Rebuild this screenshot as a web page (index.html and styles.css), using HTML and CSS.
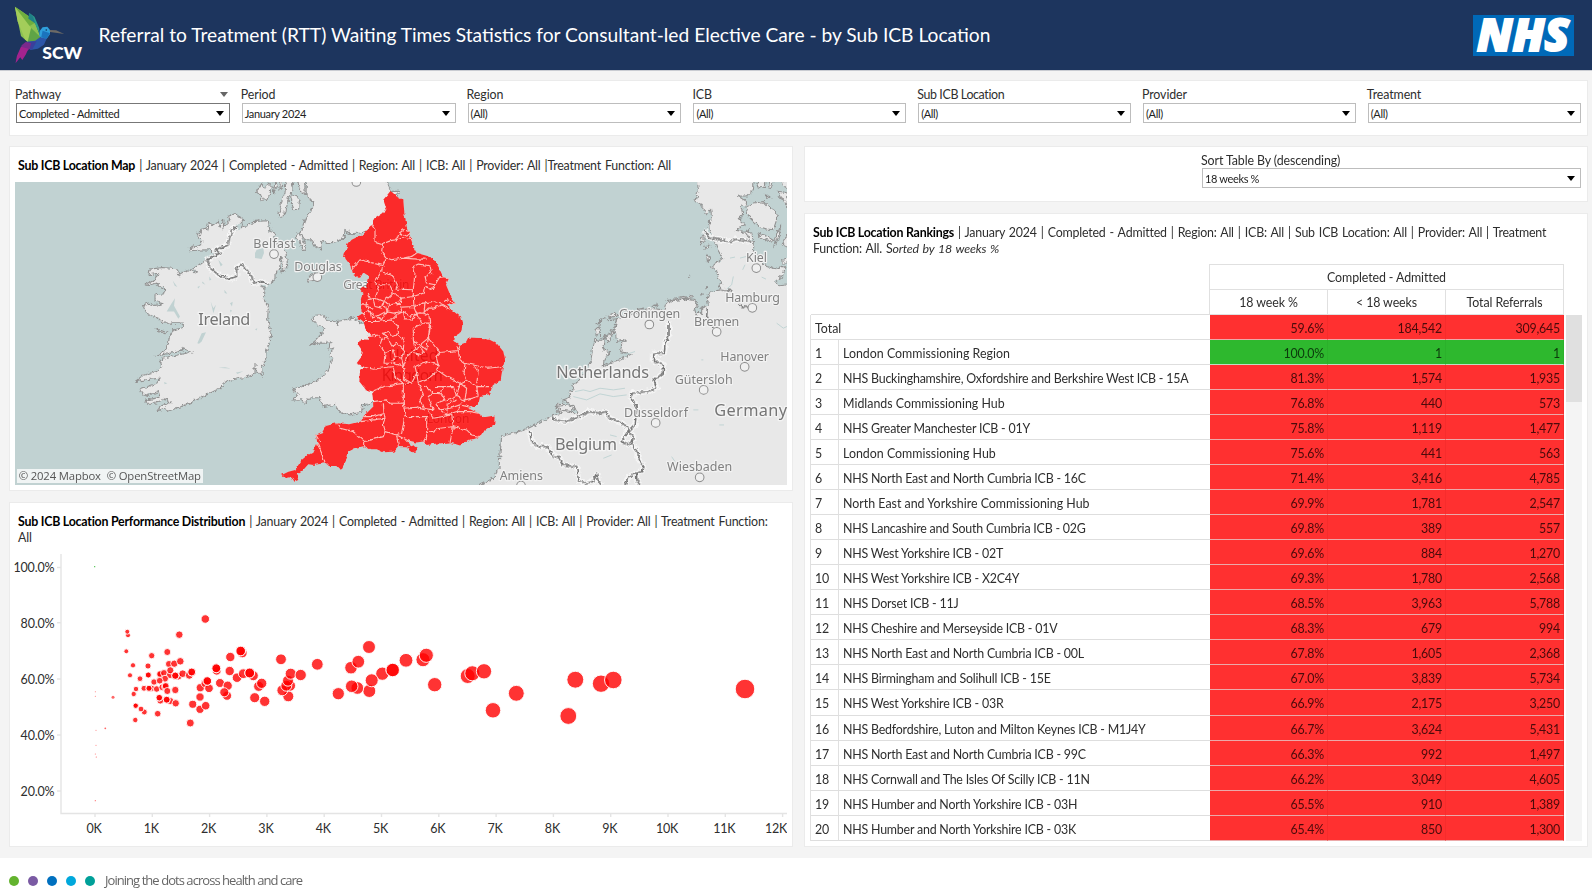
FILE: index.html
```html
<!DOCTYPE html>
<html lang="en">
<head>
<meta charset="utf-8">
<title>RTT Waiting Times</title>
<link rel="stylesheet" href="styles.css">
</head>
<body>
<header class="top">
  <svg class="scw" viewBox="0 0 250 210" preserveAspectRatio="none">
    <path fill="#8cc152" d="M44 20 62 32 84 48 104 68 120 112 104 124 82 126 62 108Z"/>
    <path fill="#6fae3e" d="M44 20 70 66 88 78 104 68 84 48Z"/>
    <path fill="#a3cd5a" d="M44 20 52 64 74 118 82 126 92 84Z"/>
    <path fill="#5fa446" d="M92 84 120 112 104 124 82 126Z"/>
    <path fill="#2c9a8c" d="M86 38 102 50 116 84 118 104 104 72Z"/>
    <path fill="#1f7f86" d="M86 38 84 56 104 70 98 50Z"/>
    <path fill="#2f9fdc" d="M118 92 126 82 140 80 148 90 148 102 138 116 124 118 116 106Z"/>
    <path fill="#1b74bd" d="M126 92 148 100 138 116 122 112Z"/>
    <circle cx="137" cy="90" r="2.5" fill="#12325c"/>
    <path fill="#6c6a66" d="M147 90 166 91 190 102 164 98 148 96Z"/>
    <path fill="#2c56a8" d="M76 126 104 122 118 112 138 116 130 134 112 146 90 150Z"/>
    <path fill="#3b3f9b" d="M76 126 108 124 96 148 84 148Z"/>
    <path fill="#7a2a8c" d="M76 126 92 130 88 146 74 158 60 152 64 136Z"/>
    <path fill="#a3238e" d="M62 140 84 146 76 164 66 180 60 172 46 190 50 168Z"/>
    <text x="125" y="177" class="scw-text" textLength="118" lengthAdjust="spacingAndGlyphs">SCW</text>
  </svg>
  <h1>Referral to Treatment (RTT) Waiting Times Statistics for Consultant-led Elective Care - by Sub ICB Location</h1>
  <svg class="nhs" viewBox="0 0 101 41">
    <rect width="101" height="41" fill="#0069b8"/>
    <text x="4" y="36.3" class="nhs-text" textLength="92" lengthAdjust="spacingAndGlyphs">NHS</text>
  </svg>
</header>

<main>
  <section class="card filters">
    <div class="field active"><label>Pathway<i class="caret grey"></i></label><div class="select">Completed - Admitted<i class="caret"></i></div></div>
    <div class="field"><label>Period</label><div class="select">January 2024<i class="caret"></i></div></div>
    <div class="field"><label>Region</label><div class="select">(All)<i class="caret"></i></div></div>
    <div class="field"><label>ICB</label><div class="select">(All)<i class="caret"></i></div></div>
    <div class="field tight"><label>Sub ICB Location</label><div class="select">(All)<i class="caret"></i></div></div>
    <div class="field"><label>Provider</label><div class="select">(All)<i class="caret"></i></div></div>
    <div class="field"><label>Treatment</label><div class="select">(All)<i class="caret"></i></div></div>
  </section>

  <div class="columns">
    <div class="col">
      <section class="card map-card">
        <h2><b>Sub ICB Location Map</b> | January 2024 | Completed - Admitted | Region: All | ICB: All | Provider: All |Treatment Function: All</h2>
        <svg class="map" viewBox="45 37 2316 908" preserveAspectRatio="none">
          <defs>
            <filter id="rough" x="-5%" y="-5%" width="110%" height="110%" color-interpolation-filters="sRGB">
              <feTurbulence type="fractalNoise" baseFrequency="0.09" numOctaves="3" seed="4"/>
              <feDisplacementMap in="SourceGraphic" scale="16" xChannelSelector="R" yChannelSelector="G"/>
            </filter>
            <filter id="fine" x="-5%" y="-5%" width="110%" height="110%" color-interpolation-filters="sRGB">
              <feTurbulence type="fractalNoise" baseFrequency="0.07" numOctaves="2" seed="9"/>
              <feDisplacementMap in="SourceGraphic" scale="12" xChannelSelector="R" yChannelSelector="G"/>
            </filter>
            <path id="england" d="M392 63 412 82 430 92 433 130 440 170 452 205 462 235 470 250 500 258 520 268 535 290 548 318 567 325 558 345 575 385 587 402 560 405 575 420 600 440 607 465 605 485 582 500 580 513 600 528 615 522 625 503 680 505 710 520 730 545 735 570 727 600 722 630 700 645 690 672 660 678 658 695 640 710 625 715 655 730 672 742 704 737 703 765 672 785 662 800 630 810 600 827 570 818 520 822 500 825 490 815 470 818 440 810 450 830 415 828 400 845 370 847 350 838 330 838 314 828 285 835 265 845 262 865 243 900 232 888 210 888 195 880 160 885 145 883 125 905 110 915 115 930 103 935 95 920 75 925 65 915 85 905 105 900 125 870 145 853 160 845 172 820 168 795 185 790 197 768 230 760 270 763 303 755 310 740 340 710 338 680 336 665 318 660 298 635 300 600 315 592 290 580 305 560 308 545 295 525 300 508 325 510 330 495 318 480 310 455 290 440 305 430 303 400 310 370 302 360 318 350 325 318 310 308 300 325 275 310 270 285 252 262 262 225 275 210 305 195 335 165 340 150 370 130 378 115 370 90ZM440 833 462 826 475 835 462 850Z"/>
            <path id="ie-border" d="M712 170 695 180 685 225 645 240 660 250 620 270 630 295 655 315 690 327 710 320 710 295 725 283 740 300 755 320 760 340 785 335 803 345"/>
            <path id="eu-border" d="M507 455 507 495 495 520 493 550 462 550 460 572 490 585 490 610 462 630 470 655 440 665 395 670 395 690 412 710 405 765 385 785 365 815 395 825 400 800 385 785M397 825 415 850 413 865 430 885 425 905 410 912 410 930 420 945M410 908 385 920 376 945M160 740 165 750 200 755 235 740 270 725 300 730 315 725 330 745 355 755 383 770 385 785M88 780 95 815 115 830 145 830 155 855 180 865 190 885 230 890 235 930 250 940 280 935 290 912 295 935 305 945M612 180 630 205 690 215 710 208 755 215"/>
          </defs>
          <rect x="45" y="37" width="2316" height="908" fill="#c1d2d2"/>
          <g class="land" filter="url(#rough)">
            <path d="M712 170 730 152 725 175 765 155 805 153 810 185 825 190 818 215 845 225 858 250 863 290 845 308 850 280 843 262 838 300 825 312 825 330 803 345 785 345 795 360 793 390 805 410 803 450 813 485 808 520 798 545 797 570 785 595 787 617 765 595 765 580 765 612 740 622 705 628 672 637 670 650 640 665 610 680 580 695 550 708 520 718 503 724 495 714 475 722 480 708 510 700 500 685 465 700 438 700 440 690 480 682 475 665 440 678 430 675 418 658 440 650 470 640 480 625 450 628 405 635 430 615 470 605 485 590 480 575 487 565 530 556 575 547 545 535 540 545 500 552 467 560 490 545 505 525 508 500 520 480 550 473 550 460 490 460 475 445 460 440 440 430 430 405 445 400 465 407 490 402 465 395 465 375 495 372 493 355 480 350 470 340 445 347 437 345 465 330 475 310 447 315 450 298 490 293 530 297 537 315 560 300 590 308 580 295 600 285 625 265 655 245 620 240 570 243 568 235 605 225 605 210 590 190 600 195 603 175 620 180 625 162 640 165 655 155 660 170 672 150 670 175 690 150 685 140 705 132 730 150Z"/>
            <path d="M920 10 918 75 938 95 938 115 915 150 900 190 915 210 935 210 945 230 962 238 965 215 985 222 1010 215 1032 205 1035 180 1050 192 1083 190 1140 170 1200 65 1172 65 1168 55 1150 10Z"/>
            <path d="M890 190 900 190 912 218 916 243 906 235 900 215 890 205ZM860 10 882 10 874 70 862 95 858 130 845 142 835 137 845 95 855 70ZM876 80 888 76 898 95 896 118 882 120 874 98ZM770 65 785 42 795 55 806 40 817 52 808 75 800 92 786 90 782 75ZM820 10 832 50 820 70 824 45ZM842 10 848 50 840 60ZM890 10 898 60 916 75 912 10ZM922 335 935 312 962 312 960 330ZM468 476 498 488 490 490 470 480Z"/>
            <path d="M1110 455 1085 460 1060 445 1012 455 1014 468 1005 455 985 450 965 435 940 437 940 452 955 470 975 474 965 490 950 510 925 530 945 520 975 520 990 515 987 540 1000 535 988 560 998 565 985 600 965 620 950 635 900 650 875 660 895 672 880 690 905 690 915 700 925 685 958 683 965 695 970 710 1005 703 1020 725 1050 735 1085 725 1088 705 1115 700 1170 660 1170 480Z"/>
          </g>
          <g transform="translate(1500 0)">
            <g class="land" filter="url(#rough)">
              <path d="M590 10 595 60 585 95 605 105 618 135 632 120 636 150 625 155 628 180 640 205 650 235 668 265 650 280 632 292 650 300 655 325 665 340 655 350 665 360 630 365 622 385 625 405 605 415 605 430 588 432 583 415 592 410 585 392 560 388 520 392 497 402 492 420 455 416 430 425 380 436 350 447 345 480 330 495 300 512 285 508 277 540 272 580 255 605 235 635 215 645 222 660 205 665 210 682 190 690 205 705 180 700 165 715 185 730 150 740 120 758 85 775 50 787 20 795 5 800 0 850 -3 895 -20 925 -60 945 -90 985 900 985 900 10Z"/>
              <path d="M320 437 345 430 352 437 330 444ZM370 430 400 424 435 418 420 426ZM455 410 475 404 470 408ZM500 392 580 378 578 384 520 392ZM285 480 296 470 300 485 290 498ZM290 462 310 447 318 450ZM615 230 630 230 628 238 614 238ZM620 255 632 262 622 275ZM605 205 612 190 612 215 604 225ZM566 316 570 318 566 320ZM618 350 622 353 618 356ZM605 370 610 373 606 376Z"/>
            </g>
            <g class="water" filter="url(#rough)">
              <path d="M765 10 760 60 740 78 712 80 738 92 740 105 722 110 728 130 718 150 735 165 708 182 730 185 745 180 752 212 762 225 760 245 785 280 800 290 825 297 845 290 855 292 850 315 825 335 840 348 900 340 900 10Z"/>
              <path d="M315 500 325 515 345 485 350 515 380 510 365 520 362 545 395 552 360 570 330 578 310 590 312 570 330 545 308 540 315 520ZM190 690 225 715 235 735 210 725 185 712ZM303 445 325 450 350 447 345 470 330 490 302 505 300 470Z"/>
            </g>
            <g class="land" filter="url(#rough)">
              <path d="M738 112 762 100 790 96 805 112 825 120 830 150 820 180 800 178 775 170 755 150 745 140ZM775 190 800 198 818 210 808 215 780 202ZM822 228 830 195 842 165 838 195 828 222ZM730 185 755 190 760 210 735 195ZM848 215 865 195 865 228 852 228ZM835 65 865 70 865 120 850 90 840 85ZM768 30 800 30 795 50 775 55ZM810 30 820 30 812 60 806 50ZM845 30 870 30 870 55 850 50ZM848 268 865 265 865 280 850 280ZM795 75 812 82 800 86ZM170 710 200 705 225 715 215 725 180 720Z"/>
            </g>
            <path class="streams" d="M225 665 250 660 270 665 300 655 340 660 375 655M220 680 260 690 300 672 340 680 380 675M330 795 350 800M310 865 335 855M515 860 525 875M580 720 595 720M658 765 672 765M785 322 798 328M700 320 695 345 680 358M690 265 705 262M728 300 735 285M830 460 850 475 861 470M720 265 740 260M345 515 355 505M375 555 405 545M690 574 700 574M604 570 610 570"/>
          </g>
          <g class="water-in">
            <path d="M770 240 790 235 792 250 785 268 765 265 765 250ZM655 270 668 285 662 290ZM500 425 515 400 525 385 522 408 540 440 535 447 522 425ZM632 395 640 415 648 405 640 430ZM592 520 605 490 618 487 605 515 597 522ZM518 332 532 352 524 348ZM655 594 675 592 693 596 675 595ZM673 360 682 372 674 370ZM690 400 698 396 696 410ZM628 320 634 330 628 332ZM608 335 616 345 606 340ZM765 478 772 475 770 482ZM592 352 600 348 596 356ZM708 165 728 160 720 180 708 182ZM492 636 502 640 494 643ZM690 420 696 422 692 428ZM708 608 730 604 712 612Z"/>
          </g>
          <g class="border-halo" filter="url(#rough)">
            <use href="#ie-border"/><use href="#eu-border" x="1500"/>
          </g>
          <g class="border-line" filter="url(#rough)">
            <use href="#ie-border"/><use href="#eu-border" x="1500"/>
            <path d="M2122 415 2120 440 2135 470 2145 480M2165 360 2190 362 2200 372M2215 400 2225 410 2245 413"/>
          </g>
          <g transform="translate(780 0)">
            <use href="#england" class="base" filter="url(#fine)"/>
            <g class="under">
              <text x="250" y="357" textLength="198" class="s">Great Britain</text>
              <text x="385" y="572" textLength="150">United</text>
              <text x="365" y="633" textLength="184">Kingdom</text>
              <text x="500" y="759" textLength="128" class="s">London</text>
            </g>
            <use href="#england" class="region" filter="url(#fine)"/>
            <path class="seams" filter="url(#fine)" d="M335 165 345 180 345 215 368 222 395 212 410 210 418 190 432 180 445 185M410 210 430 205 455 210M418 190 440 200 450 190M368 222 365 245 380 265 395 270 430 265 470 268 500 268M430 265 455 260 470 250M275 300 300 270 340 280 368 288 380 265M368 288 365 305 400 320 412 345 408 358 460 360 465 310 460 290 475 283 510 288 515 310 495 320 500 340 525 345 540 320 567 325M365 305 345 335 355 360 345 385 320 390 318 410 340 415M355 345 385 345 400 370 425 385 460 380 460 360M345 385 370 395 390 380 400 370M425 385 420 400 390 405 370 395 378 425 400 430 425 425 420 400M460 380 490 370 495 350 520 360 525 345M460 380 462 410 425 412M462 410 490 400 520 395 545 400 560 390 587 402M462 410 470 430 450 440 430 425M470 430 490 430 505 415 520 415 545 405 570 420M495 400 492 430 510 440 512 460 505 500M303 430 330 425 350 440 378 425M318 410 330 425 335 445 350 440 365 450 378 425M303 405 325 405M310 430 320 450M340 390 345 410 365 415 370 395M385 405 382 430M330 385 325 370M312 455 350 455 395 450 410 435 430 425 435 450 455 450 470 430 485 460 510 460M395 450 415 470 415 495 432 510 430 540 410 520 400 530 380 500 365 510 358 495 325 500M485 460 460 475 460 510 480 525 505 505 512 470 510 460M415 495 395 500 385 485 370 490 380 500M365 510 360 525 375 550 400 540 405 560 425 565 432 540M375 550 372 580 395 580 405 560M400 580 430 590 425 565 M460 510 465 540 440 560 430 590M465 540 480 530 490 545 475 555 460 550M480 525 500 540 505 505 525 530 540 548 595 542 600 528M540 548 528 560 535 585 500 575 465 590 470 610 455 640 430 625 435 600 425 590M595 542 600 570 615 580 685 595 727 590M595 542 592 530M615 580 612 610 620 630 600 640 560 620 530 600 535 585M315 592 340 598 400 590 405 620 430 640 455 640M336 665 370 650 400 645 430 640 430 700 390 700 375 690 340 695M470 610 475 640 500 630 530 605M475 640 490 670 480 690 490 715 520 720 505 680 520 670 500 650 490 645M520 670 545 672 550 650 525 650M545 672 555 690 530 700M550 650 580 650 590 680 560 690M600 640 590 680 615 690 620 655 600 640M620 630 650 650 690 650M650 650 655 680 615 690M640 590 655 600 650 640M615 690 600 705 630 712M530 700 540 720 570 715 600 705M540 720 560 735 590 725 630 725 655 730M560 735 565 700 590 690M590 725 600 710M370 700 372 730 340 740 310 740M372 730 375 745 340 750 303 755M430 700 435 735 425 790 410 795 375 785 370 760 375 745M430 715 470 712 495 720M435 740 500 740 500 800 490 820M505 725 520 745 575 735M230 760 240 775 280 785 314 815 370 800 375 785M314 815 314 828M410 795 415 828M410 795 440 810 465 825M500 790 540 775 580 770 575 735M580 770 570 818M580 770 620 780 635 795 662 800M172 820 185 850 195 880M168 795 182 820"/>
          </g>
          <g class="dots"><circle cx="822" cy="253" r="13"/><circle cx="952" cy="322" r="13"/><circle cx="1069" cy="37" r="13"/><circle cx="2269" cy="295" r="13"/><circle cx="2257" cy="414" r="13"/><circle cx="2150" cy="486" r="13"/><circle cx="1948" cy="464" r="13"/><circle cx="2234" cy="591" r="13"/><circle cx="2111" cy="660" r="13"/><circle cx="1967" cy="759" r="13"/><circle cx="2099" cy="922" r="13"/><circle cx="1563" cy="947" r="13"/></g>
          <g class="town">
            <text x="760" y="234" textLength="125">Belfast</text>
            <text x="883" y="304" textLength="142">Douglas</text>
            <text x="2238" y="277" textLength="63">Kiel</text>
            <text x="2176" y="396" textLength="164">Hamburg</text>
            <text x="1857" y="446" textLength="184">Groningen</text>
            <text x="2082" y="468" textLength="136">Bremen</text>
            <text x="2161" y="572" textLength="146">Hanover</text>
            <text x="2024" y="642" textLength="174">Gütersloh</text>
            <text x="1872" y="740" textLength="192">Dusseldorf</text>
            <text x="2001" y="903" textLength="196">Wiesbaden</text>
            <text x="1499" y="930" textLength="130">Amiens</text>
          </g>
          <g class="country">
            <text x="595" y="467" textLength="156">Ireland</text>
            <text x="1669" y="623" textLength="278">Netherlands</text>
            <text x="1665" y="840" textLength="186">Belgium</text>
            <text x="2143" y="737" textLength="218">Germany</text>
          </g>
          <rect x="51" y="897" width="558" height="42" fill="#fff" opacity=".75"/>
          <text class="credit" x="56" y="930" textLength="247">© 2024 Mapbox</text>
          <text class="credit" x="320" y="930" textLength="283">© OpenStreetMap</text>
        </svg>
      </section>

      <section class="card chart-card">
        <h2><b>Sub ICB Location Performance Distribution</b> | January 2024 | Completed - Admitted | Region: All | ICB: All | Provider: All | Treatment Function:<br>All</h2>
        <svg class="chart" viewBox="12 552 775 288" width="775" height="288"></svg>
      </section>
    </div>

    <div class="col">
      <section class="card sort-card">
        <div class="field"><label>Sort Table By (descending)</label><div class="select">18 weeks %<i class="caret"></i></div></div>
      </section>
      <section class="card rank-card">
        <h2><b>Sub ICB Location Rankings</b> | January 2024 | Completed - Admitted | Region: All | ICB: All | Sub ICB Location: All | Provider: All | Treatment<br>Function: All. S<em>orted by 18 weeks %</em></h2>
        <div class="table-wrap">
          <div class="table">
            <div class="thead">
              <div class="span">Completed - Admitted</div>
              <div>18 week %</div><div>&lt; 18 weeks</div><div>Total Referrals</div>
            </div>
            <div class="tbody"></div>
          </div>
          <div class="scroll"><div class="thumb"></div></div>
        </div>
      </section>
    </div>
  </div>
</main>

<footer>
  <i class="dot g"></i><i class="dot p"></i><i class="dot b"></i><i class="dot c"></i><i class="dot t"></i>
  <span>Joining the dots across health and care</span>
</footer>
<script src="app.js"></script>
</body>
</html>
```
FILE: styles.css
```css
* { box-sizing: border-box; }
body { margin: 0; width: 1592px; height: 893px; overflow: hidden; background: #fff; color: #2e2e2e; font-family: Lato, "Open Sans", sans-serif; font-size: 12.4px; }

.top { display: flex; align-items: center; height: 71px; background: #1d355e; border-bottom: 1px solid #c9ccd2; }
.scw { width: 84.5px; height: 70px; flex: none; }
.scw-text { font: 900 50px Lato, sans-serif; fill: #fff; }
.top h1 { flex: 1; margin: -2px 0 0 14px; font-size: 19.2px; font-weight: 400; color: #fff; white-space: nowrap; }
.nhs { width: 101px; height: 41px; margin-right: 18px; flex: none; overflow: visible; }
.nhs-text { font: italic 800 45px "Open Sans", sans-serif; fill: #fff; stroke: #fff; stroke-width: 2; }

main { height: 787px; padding: 9px 4px 0 9px; background: #f4f4f4; }
.card { background: #fff; border: 1px solid #ebebeb; }
.filters { height: 56px; padding: 5px 6px 0 6px; display: grid; grid-template-columns: repeat(3, 213.8px) repeat(4, 212.8px); gap: 12px; }
.field label { display: flex; justify-content: space-between; align-items: center; height: 16px; margin: 0 0 1px -1px; font-size: 12.4px; letter-spacing: -.1px; }
.tight label { letter-spacing: -.36px; }
.select { display: flex; justify-content: space-between; align-items: center; height: 20px; padding: 0 5px 0 2px; border: 1px solid #bdbdbd; font-size: 11px; letter-spacing: -.35px; color: #222; }
.active .select { border-color: #777; }
.caret { width: 0; height: 0; border: 4px solid transparent; border-top: 5px solid #000; border-bottom: 0; }
.caret.grey { border-top-color: #666; margin-right: 2px; }

.columns { display: grid; grid-template-columns: 784px 784px; gap: 11px; margin-top: 10px; }
.card h2 { margin: 0; font-size: 12.4px; line-height: 16px; font-weight: 400; letter-spacing: -.2px; word-spacing: 1.05px; white-space: nowrap; }
.card h2 b { font-weight: 700; color: #000; letter-spacing: -.24px; word-spacing: 0; }
.map-card { height: 345px; padding: 11px 5px 0; }
.map-card h2 { padding-left: 3px; height: 24px; }
.map { display: block; width: 772px; height: 303px; }
.chart-card { height: 345px; margin-top: 11px; padding: 11px 5px 0 2px; }
.chart-card h2 { padding: 0 0 0 6px; height: 38px; }
.chart { display: block; }

.land path { fill: #e8e8e8; stroke: #919191; stroke-width: 3.2; }
.water path { fill: #c1d2d2; stroke: #919191; stroke-width: 3.2; }
.water-in path { fill: #c1d2d2; }
.streams { fill: none; stroke: #b9d0d0; stroke-width: 2.5; }
.border-halo { fill: none; stroke: #f8f8f8; stroke-width: 16; stroke-linejoin: round; opacity: .9; }
.border-line { fill: none; stroke: #757575; stroke-width: 4.6; }
.base { fill: #e8e8e8; }
.region { fill: #f00; fill-opacity: .82; }
.seams { fill: none; stroke: #ffbdb8; stroke-width: 3.4; stroke-linejoin: round; }
.map text { font-family: "Noto Sans", sans-serif; paint-order: stroke; }
.town text { font-size: 37.5px; fill: #808080; stroke: #f2f2f2; stroke-width: 7; stroke-linejoin: round; }
.country text { font-size: 49px; fill: #757575; stroke: #f4f4f4; stroke-width: 8; stroke-linejoin: round; }
.map .under text { font-size: 47px; fill: #757575; }
.map .under .s { font-size: 36px; fill: #858585; stroke: #f0f0f0; stroke-width: 6; }
.dots circle { fill: #f0f0f0; stroke: #8c8c8c; stroke-width: 3; }
.map .credit { font-size: 34px; fill: #555; font-family: "Open Sans", sans-serif; }

.axis { stroke: #e4e4e4; stroke-width: 1.4; }
.chart text { font-family: Lato, sans-serif; font-size: 12.5px; letter-spacing: -.2px; fill: #2e2e2e; }
.mark { fill: #f00; fill-opacity: .8; stroke: #fff; stroke-width: .9; }
.speck { fill: #f66; }
.speck.ok { fill: #2eb82e; }

.sort-card { height: 56px; padding: 5px 6px 0 397px; }
.sort-card .field label { margin-bottom: 0; }
.rank-card { height: 634px; margin-top: 11px; padding: 11px 5px 0 5px; }
.rank-card h2 { padding: 0 0 0 3px; height: 39px; }
.table-wrap { display: flex; justify-content: space-between; align-items: flex-start; }
.table { width: 754px; }
.thead { display: grid; grid-template-columns: 118px 118px 118px; margin-left: 399px; border-top: 1px solid #e0e0e0; border-left: 1px solid #e0e0e0; }
.thead div { height: 25px; line-height: 26px; text-align: center; border-right: 1px solid #e0e0e0; border-bottom: 1px solid #e0e0e0; letter-spacing: -.1px; }
.thead .span { grid-column: 1 / 4; }
.row { display: grid; grid-template-columns: 28px 371px 118px 118px 118px; height: 25.04px; line-height: 27px; border-left: 1px solid #e0e0e0; }
.row > div { height: 25.04px; border-bottom: 1px solid #dedede; }
.row .n { padding-left: 4px; border-right: 1px solid #e0e0e0; letter-spacing: -.2px; }
.row .name { padding-left: 4px; white-space: nowrap; }
.row.nhs-row .name { letter-spacing: -.2px; }
.row.total .name { grid-column: 1 / 3; box-shadow: 0 -1px #dedede; }
.row .v { background: #ff3030; color: #4a0b0b; text-align: right; padding-right: 3px; border-bottom-color: #eba9a9; border-right: 1px solid #f72c2c; letter-spacing: -.2px; }
.row.ok .v { background: #2eb82e; color: #0c3a0c; border-bottom-color: #c0dcc0; border-right-color: #2bb12b; }
.scroll { width: 16px; height: 526px; margin: 51px 0 0; background: #f4f4f4; }
.thumb { height: 87px; background: #e0e0e0; }

footer { display: flex; align-items: center; height: 35px; padding: 10px 0 0 9px; gap: 9px; }
.dot { width: 10px; height: 10px; border-radius: 50%; }
.g { background: #63b32e; } .p { background: #7a5aa3; } .b { background: #0070bf; } .c { background: #00a8dc; } .t { background: #00a099; }
footer span { margin: -1px 0 0 1px; font: 400 13px "Open Sans", sans-serif; letter-spacing: -.95px; color: #666; }
```
FILE: app.js
```js
const rows = [
  ["", "Total", "59.6%", "184,542", "309,645"],
  [1, "London Commissioning Region", "100.0%", "1", "1"],
  [2, "NHS Buckinghamshire, Oxfordshire and Berkshire West ICB - 15A", "81.3%", "1,574", "1,935"],
  [3, "Midlands Commissioning Hub", "76.8%", "440", "573"],
  [4, "NHS Greater Manchester ICB - 01Y", "75.8%", "1,119", "1,477"],
  [5, "London Commissioning Hub", "75.6%", "441", "563"],
  [6, "NHS North East and North Cumbria ICB - 16C", "71.4%", "3,416", "4,785"],
  [7, "North East and Yorkshire Commissioning Hub", "69.9%", "1,781", "2,547"],
  [8, "NHS Lancashire and South Cumbria ICB - 02G", "69.8%", "389", "557"],
  [9, "NHS West Yorkshire ICB - 02T", "69.6%", "884", "1,270"],
  [10, "NHS West Yorkshire ICB - X2C4Y", "69.3%", "1,780", "2,568"],
  [11, "NHS Dorset ICB - 11J", "68.5%", "3,963", "5,788"],
  [12, "NHS Cheshire and Merseyside ICB - 01V", "68.3%", "679", "994"],
  [13, "NHS North East and North Cumbria ICB - 00L", "67.8%", "1,605", "2,368"],
  [14, "NHS Birmingham and Solihull ICB - 15E", "67.0%", "3,839", "5,734"],
  [15, "NHS West Yorkshire ICB - 03R", "66.9%", "2,175", "3,250"],
  [16, "NHS Bedfordshire, Luton and Milton Keynes ICB - M1J4Y", "66.7%", "3,624", "5,431"],
  [17, "NHS North East and North Cumbria ICB - 99C", "66.3%", "992", "1,497"],
  [18, "NHS Cornwall and The Isles Of Scilly ICB - 11N", "66.2%", "3,049", "4,605"],
  [19, "NHS Humber and North Yorkshire ICB - 03H", "65.5%", "910", "1,389"],
  [20, "NHS Humber and North Yorkshire ICB - 03K", "65.4%", "850", "1,300"]
];
document.querySelector(".tbody").innerHTML = rows.map(([n, name, ...vals]) =>
  `<div class="row${n === "" ? " total" : ""}${name.startsWith("NHS") ? " nhs-row" : ""}${vals[0] === "100.0%" ? " ok" : ""}">` +
  (n === "" ? "" : `<div class="n">${n}</div>`) +
  `<div class="name">${name}</div>` + vals.map(v => `<div class="v">${v}</div>`).join("") + `</div>`
).join("");

// Scatter marks as [x, y] in thirds of a pixel, grouped by the origin they are offset from.
const groups = [
  { ox: 50, oy: 560, pts: [[466,177],[388,224],[234,226],[232,215],[229,274],[249,316],[294,318],[305,287],[352,276],[240,346],[270,356],[295,345],[295,345],[357,312],[373,311],[391,304],[331,344],[330,342],[342,339],[360,345],[361,331],[385,349],[376,347],[376,347],[398,341],[418,346],[425,336],[425,336],[312,366],[345,356],[329,362],[282,385],[305,385],[297,385],[297,385],[320,387],[337,382],[345,380],[347,378],[352,393],[376,390],[258,387],[251,402],[331,422],[328,413],[328,413],[361,423],[350,419],[350,419],[377,430],[257,437],[257,437],[283,456],[273,447],[323,461],[256,480],[421,489],[428,433],[450,411],[451,383],[450,448],[467,437],[466,370],[477,385],[472,363],[472,363],[510,369],[533,377],[531,407],[523,397],[500,332],[499,325],[499,325],[539,333],[541,291],[577,279],[572,273],[572,273],[561,353],[580,341],[610,347],[599,339],[599,339],[626,379],[635,370],[614,413],[644,424],[693,298],[715,409],[720,377],[697,391],[709,377],[714,362],[722,341],[752,345],[802,313]] },
  { ox: 0, oy: 490, pts: [[1107,471],[1053,533],[1075,515],[1147,551],[1178,540],[1178,540],[1108,603],[1115,571],[1072,594],[1055,589],[1015,611]] },
  { ox: 400, oy: 490, pts: [[18,511],[69,509],[79,496],[104,584],[203,558],[217,550],[252,544],[279,661],[349,610],[526,569],[505,678],[603,581],[640,570],[1035,597]] }
];
let svg = `<path class="axis" fill="none" d="M61 554V813.5H787"/>`;
[["100.0%", 567.5], ["80.0%", 622.7], ["60.0%", 679], ["40.0%", 735], ["20.0%", 791]].forEach(([t, y]) => {
  svg += `<path class="axis" d="M57 ${y}H61"/><text x="54.3" y="${y + 4.8}" text-anchor="end">${t}</text>`;
});
for (let k = 0; k <= 12; k++) {
  const x = 95 + k * 57.3;
  svg += `<path class="axis" d="M${x} 813V817"/><text x="${k === 12 ? 776 : x - 1}" y="833.3" text-anchor="middle">${k}K</text>`;
}
[[95.3,691.7,.5],[95.3,696.3,.5],[113,697.3,1.5],[105.3,728.3,.9],[96,730.3,.5],[96,745.3,.5],[95.3,754,.5],[96.3,757,.6],[95.3,800.7,.6]].forEach(([x, y, r]) => {
  svg += `<circle class="speck" cx="${x}" cy="${y}" r="${r}"/>`;
});
svg += `<circle class="speck ok" cx="94.7" cy="566.7" r=".6"/>`;
groups.forEach(g => g.pts.forEach(([px, py]) => {
  const x = g.ox + px / 3, y = g.oy + py / 3, r = 2.8 * Math.sqrt((x - 94.7) / 57.3) + .35;
  svg += `<circle class="mark" cx="${x.toFixed(1)}" cy="${y.toFixed(1)}" r="${r.toFixed(2)}"/>`;
}));
document.querySelector(".chart").innerHTML = svg;
```
